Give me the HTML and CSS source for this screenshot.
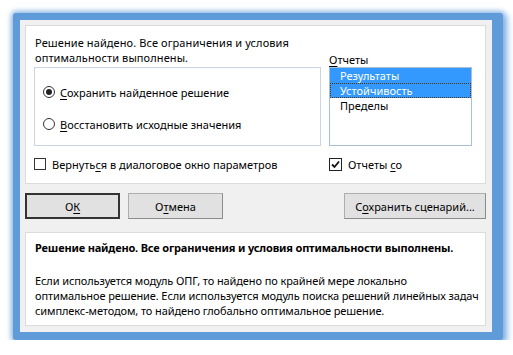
FILE: index.html
```html
<!DOCTYPE html>
<html>
<head>
    <meta charset="utf-8">
    <title>Результаты поиска решения</title>
    <link rel="stylesheet" href="styles.css">
</head>
<body>
    <div class="frame">
        <div class="window">
            <div class="panel panel-top">
                <div class="heading">Решение найдено. Все ограничения и условия оптимальности выполнены.</div>
                <div class="reports-label"><u>О</u>тчеты</div>

                <div class="group-box">
                    <div class="radio-row">
                        <span class="radio checked"></span>
                        <span><u>С</u>охранить найденное решение</span>
                    </div>
                    <div class="radio-row">
                        <span class="radio"></span>
                        <span><u>В</u>осстановить исходные значения</span>
                    </div>
                </div>
                <div class="listbox">
                    <div class="list-item selected">Результаты</div>
                    <div class="list-item selected focused">Устойчивость</div>
                    <div class="list-item">Пределы</div>
                </div>

                <div class="check-row">
                    <span class="checkbox"></span>
                    <span>Вернуть<u>с</u>я в диалоговое окно параметров</span>
                </div>
                <div class="check-row">
                    <span class="checkbox checked">
                        <svg width="9" height="9" viewBox="0 0 9 9"><path d="M1 4.5 L3.5 7 L8 1.5" fill="none" stroke="#111" stroke-width="1.8"/></svg>
                    </span>
                    <span>Отчеты <u>с</u>о</span>
                </div>
            </div>

            <div class="button-row">
                <button class="btn btn-default">О<u>К</u></button>
                <button class="btn">О<u>т</u>мена</button>
                <button class="btn btn-wide">С<u>о</u>хранить сценарий...</button>
            </div>

            <div class="panel panel-bottom">
                <p class="summary">Решение найдено. Все ограничения и условия оптимальности выполнены.</p>
                <p class="details">Если используется модуль ОПГ, то найдено по крайней мере локально<br>
                    оптимальное решение. Если используется модуль поиска решений линейных задач<br>
                    симплекс-методом, то найдено глобально оптимальное решение.</p>
            </div>
        </div>
    </div>
</body>
</html>
```

FILE: styles.css
```css
body {
    margin: 0;
    background-color: #fff;
    font-family: 'Noto Sans', 'Open Sans', Arial, sans-serif;
    font-size: 11px;
    color: #000;
}
u {
    text-decoration-thickness: 1px;
    text-underline-offset: 2px;
}
/* blue window frame with soft glow */
.frame {
    margin: 13px 0 0 13px;
    width: 472px;
    padding: 7px 11px 8px 7px;
    background-color: #5f9ad9;
    border-radius: 3px;
    box-shadow: 0 0 5px 2px rgba(95, 154, 217, 0.6), 3px 3px 6px 2px rgba(95, 154, 217, 0.5);
}
.window {
    width: 472px;
    height: 312px;
    box-sizing: border-box;
    padding: 5px 6px 6px 5px;
    background-color: #f0f0f0;
}
.panel {
    background-color: #fff;
    border: 1px solid #dcdcdc;
    box-sizing: border-box;
}
.panel-top {
    height: 159px;
    padding: 9px 0 0 8px;
    display: grid;
    grid-template-columns: 287px 143px;
    grid-template-rows: 32px 79px 28px;
    column-gap: 8px;
}
.heading {
    line-height: 15px;
    padding-left: 1px;
    padding-right: 20px;
    letter-spacing: 0.1px;
}
.reports-label {
    align-self: end;
    line-height: 15px;
}
.group-box {
    border: 1px solid #c9d5e0;
    padding: 16px 0 0 8px;
}
.radio-row {
    display: flex;
    align-items: center;
    gap: 5px;
    height: 16px;
    margin-bottom: 16px;
}
.radio {
    width: 10px;
    height: 10px;
    border: 1px solid #333;
    border-radius: 50%;
    background-color: #fff;
    position: relative;
}
.radio.checked::after {
    content: "";
    position: absolute;
    left: 2px;
    top: 2px;
    width: 6px;
    height: 6px;
    border-radius: 50%;
    background-color: #222;
}
.listbox {
    border: 1px solid #a9bfd6;
}
.list-item {
    height: 15px;
    line-height: 15px;
    padding-left: 10px;
    box-sizing: border-box;
}
.list-item.selected {
    background-color: #3399ff;
    color: #fff;
}
.list-item.focused {
    border: 1px dotted #553311;
    padding-left: 9px;
    line-height: 13px;
}
.check-row {
    display: flex;
    align-items: center;
    gap: 6px;
    padding-top: 10px;
    height: 16px;
}
.check-row:first-of-type {
    padding-left: 2px;
}
.checkbox {
    width: 10px;
    height: 10px;
    border: 1px solid #333;
    background-color: #fff;
    display: flex;
    align-items: center;
    justify-content: center;
}
.checkbox.checked {
    width: 11px;
    height: 11px;
    border-color: #222;
}
.button-row {
    display: flex;
    gap: 8px;
    margin-top: 9px;
    height: 26px;
}
.btn {
    width: 95px;
    height: 26px;
    padding: 0;
    font-family: inherit;
    font-size: 11px;
    color: #000;
    background-color: #e1e1e1;
    border: 1px solid #adadad;
    border-right-color: #8c8c8c;
    border-bottom-color: #8c8c8c;
}
.btn-default {
    border: 2px solid #333;
}
.btn-wide {
    width: 142px;
    margin-left: auto;
}
.panel-bottom {
    margin-top: 13px;
    height: 94px;
    padding: 7px 0 0 9px;
}
.summary {
    margin: 0;
    font-weight: bold;
    line-height: 15px;
    letter-spacing: -0.17px;
}
.details {
    margin: 18px 0 0 0;
    line-height: 15px;
    letter-spacing: -0.1px;
    white-space: nowrap;
}
```
